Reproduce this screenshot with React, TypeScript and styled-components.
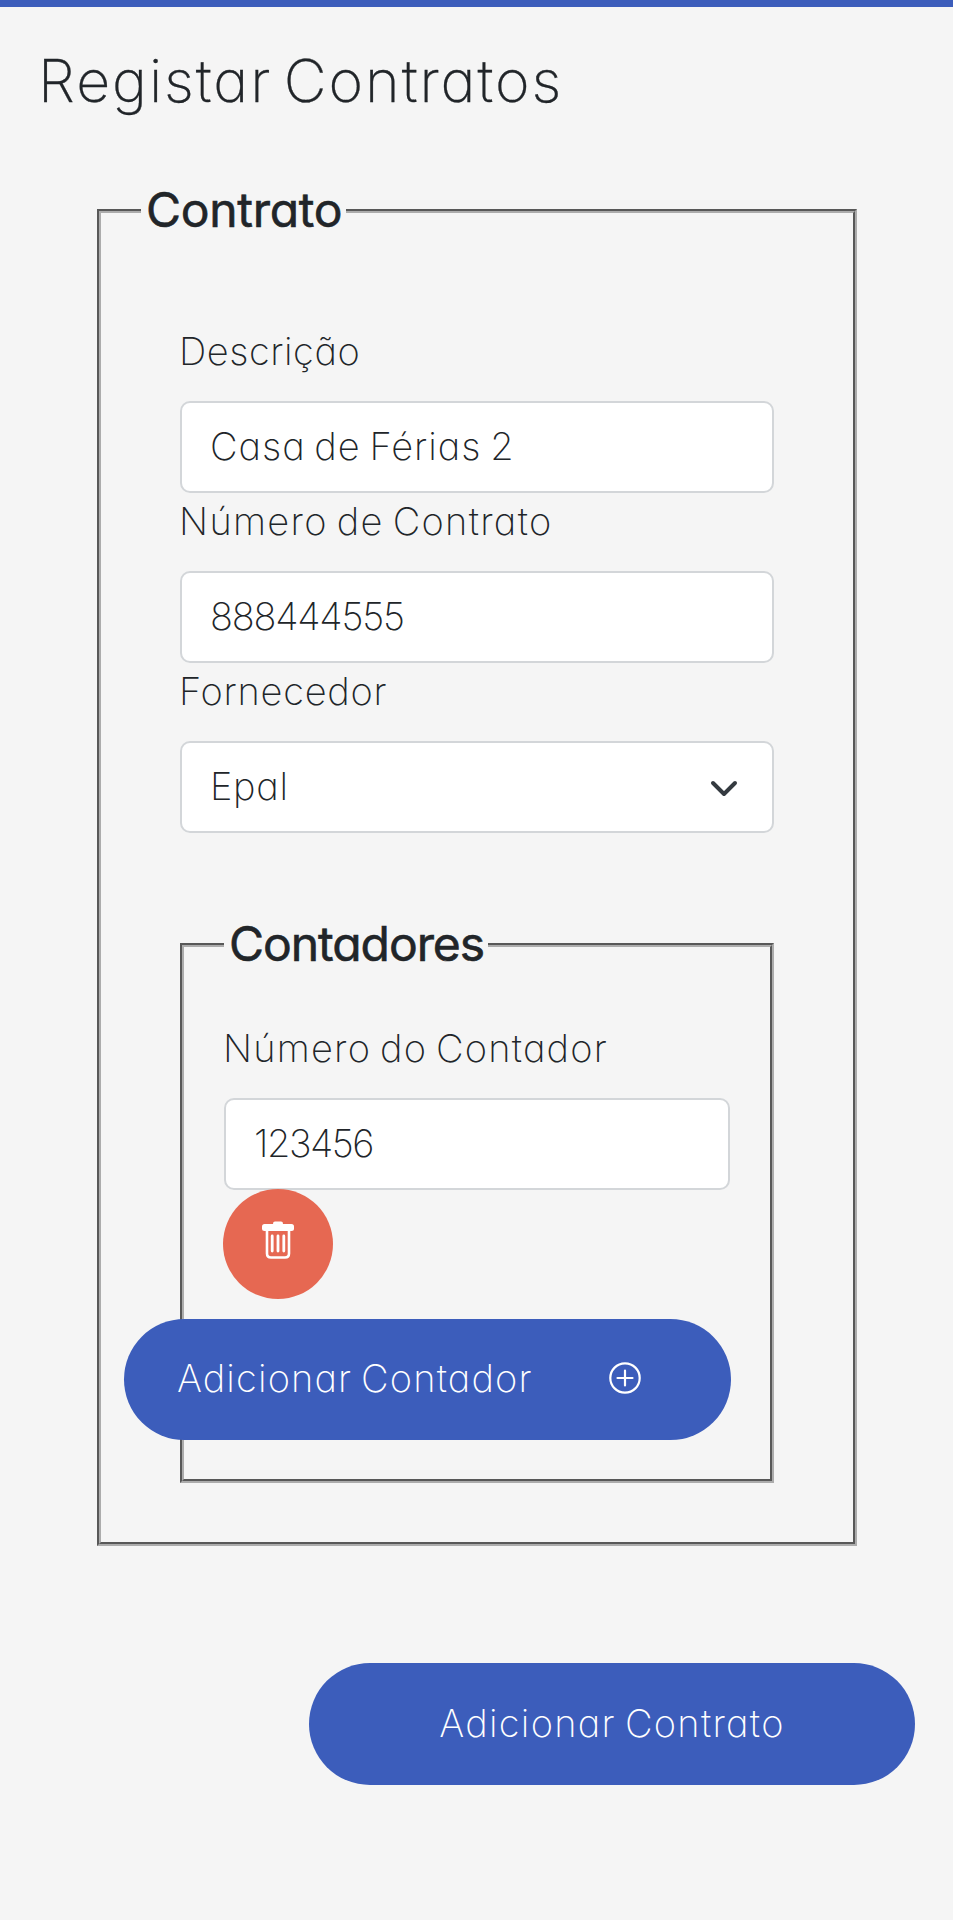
import React from "react";
import styled, { createGlobalStyle } from "styled-components";

const colors = {
  page: "#f5f5f5",
  ink: "#212529",
  blue: "#3c5dbb",
  red: "#e66852",
  field: "#d3d6d9",
};

const GlobalStyle = createGlobalStyle`
  *, *::before, *::after { box-sizing: border-box; }
  body {
    margin: 0;
    background: ${colors.page};
    color: ${colors.ink};
    font-family: Inter, "Liberation Sans", sans-serif;
    font-feature-settings: "cv11";
    font-size: 38px;
    font-weight: 200;
    word-spacing: -3px;
  }
`;

const Page = styled.main`
  display: flex;
  flex-direction: column;
  min-height: 1920px;
`;

const TopBar = styled.div`
  height: 7px;
  background: ${colors.blue};
`;

const Title = styled.h1`
  margin: 39px 0 0 38px;
  font-size: 59px;
  font-weight: 200;
  line-height: 70px;
  letter-spacing: 1.95px;
  word-spacing: -7px;
  -webkit-text-stroke: 0.3px currentColor;
`;

const Group = styled.fieldset`
  min-width: 0;
  margin: 0;
  padding: 0 40px;
  border: 4px groove #acacac;
`;

const ContractGroup = styled(Group)`
  width: 760px;
  margin: 66px 0 0 97px;
`;

const MeterGroup = styled(Group)`
  margin-top: 83px;
`;

const Legend = styled.legend<{ $track?: number }>`
  height: 58px;
  padding: 0 4px 0 5px;
  font-size: 48px;
  font-weight: 400;
  line-height: 56px;
  letter-spacing: ${(p) => p.$track ?? 0}px;
  -webkit-text-stroke: 0.6px currentColor;
`;

const ContractBody = styled.div`
  padding: 83px 39px 59px;
`;

const MeterBody = styled.div`
  display: flex;
  flex-direction: column;
  padding: 46px 0 39px;
`;

const Label = styled.div<{ $track: number }>`
  height: 78px;
  margin-left: -1px;
  line-height: 57px;
  white-space: nowrap;
  letter-spacing: ${(p) => p.$track}px;
`;

const Field = styled.div<{ $track: number }>`
  display: flex;
  align-items: center;
  justify-content: space-between;
  height: 92px;
  padding: 0 34px 2px 28px;
  border: 2px solid ${colors.field};
  border-radius: 10px;
  background: #fff;
  letter-spacing: ${(p) => p.$track}px;
`;

const Chevron = styled.svg`
  width: 28px;
  height: 18px;
  margin-top: 5px;
`;

const DeleteButton = styled.button`
  display: flex;
  justify-content: center;
  width: 110px;
  height: 110px;
  margin: -1px 0 0 -1px;
  padding: 32px 0 0;
  border: 0;
  border-radius: 50%;
  background: ${colors.red};
`;

const PillButton = styled.button<{ $track: number }>`
  display: flex;
  align-items: center;
  justify-content: center;
  width: 606px;
  height: 122px;
  padding: 0 0 2px;
  border: 0;
  border-radius: 61px;
  background: ${colors.blue};
  color: #fff;
  font: inherit;
  font-feature-settings: inherit;
  letter-spacing: ${(p) => p.$track}px;
  word-spacing: inherit;
  white-space: nowrap;
`;

const AddMeterButton = styled(PillButton)`
  justify-content: space-between;
  width: 607px;
  height: 121px;
  margin: 20px 0 0 -100px;
  padding: 0 90px 3px 53px;
`;

const SubmitButton = styled(PillButton)`
  align-self: flex-end;
  margin: 117px 38px 0 0;
`;

const TrashIcon = () => (
  <svg width="32" height="38" viewBox="0 0 32 38" fill="none" stroke="#fff">
    <path d="M13 2.5h6" strokeWidth="4" strokeLinecap="round" />
    <rect x="0" y="3" width="32" height="7" rx="2.5" fill="#fff" stroke="none" />
    <path d="M5 8v24.500q0 4 4 4h14q4 0 4-4V8" strokeWidth="2.600" />
    <path d="M10.200 15v15M16 15v15M21.800 15v15" strokeWidth="2.800" strokeLinecap="round" />
  </svg>
);

const PlusCircleIcon = () => (
  <svg width="32" height="32" viewBox="0 0 32 32" fill="none" stroke="#fff" strokeWidth="2.200" strokeLinecap="round">
    <circle cx="16" cy="16" r="14.700" />
    <path d="M16 8.500v15M8.500 16h15" />
  </svg>
);

export default function App() {
  return (
    <Page>
      <GlobalStyle />
      <TopBar />
      <Title>Registar Contratos</Title>

      <ContractGroup>
        <Legend $track={-0.3}>Contrato</Legend>
        <ContractBody>
          <Label $track={0.55}>Descrição</Label>
          <Field $track={1}>Casa de Férias 2</Field>
          <Label $track={1.3}>Número de Contrato</Label>
          <Field $track={-1.2}>888444555</Field>
          <Label $track={0.75}>Fornecedor</Label>
          <Field $track={0.7}>
            Epal
            <Chevron viewBox="0 0 28 18" fill="none" stroke="#343a40" strokeWidth="4">
              <path d="M3 3l11 11L25 3" strokeLinecap="round" strokeLinejoin="round" />
            </Chevron>
          </Field>

          <MeterGroup>
            <Legend $track={-1.05}>Contadores</Legend>
            <MeterBody>
              <Label $track={1.2}>Número do Contador</Label>
              <Field $track={-1.5}>123456</Field>
              <DeleteButton type="button" aria-label="Remover contador">
                <TrashIcon />
              </DeleteButton>
              <AddMeterButton type="button" $track={1.15}>
                Adicionar Contador
                <PlusCircleIcon />
              </AddMeterButton>
            </MeterBody>
          </MeterGroup>
        </ContractBody>
      </ContractGroup>

      <SubmitButton type="button" $track={1.3}>
        Adicionar Contrato
      </SubmitButton>
    </Page>
  );
}
